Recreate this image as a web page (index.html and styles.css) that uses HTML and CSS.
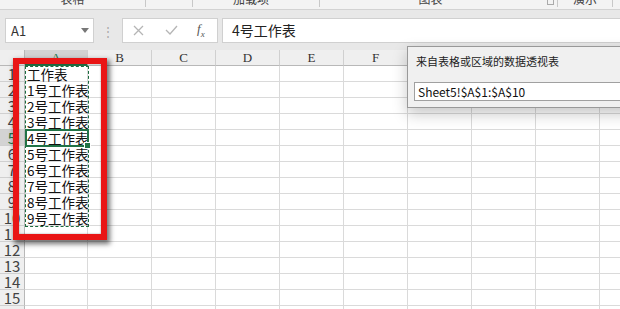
FILE: index.html
```html
<!DOCTYPE html>
<html lang="zh-CN">

<head>
    <meta charset="UTF-8">
    <title>数据透视表</title>
    <link rel="stylesheet" href="styles.css">
</head>

<body>
    <div class="ribbon">
        <div class="group g1"><span>表格</span></div>
        <div class="group g2"></div>
        <div class="group g3"><span>加载项</span></div>
        <div class="group g4"><span>图表</span><i class="launcher"></i></div>
        <div class="group g5"><span>演示</span></div>
    </div>

    <div class="formula-bar">
        <div class="name-box">
            <span>A1</span>
            <svg width="8" height="5" viewBox="0 0 8 5"><path d="M0 0h8L4 5z" fill="#777"/></svg>
        </div>
        <div class="grip">⋮</div>
        <div class="fx-buttons">
            <svg width="11" height="11" viewBox="0 0 11 11"><path d="M1 1l9 9M10 1l-9 9" stroke="#b5b5b5" stroke-width="1.3" fill="none"/></svg>
            <svg width="13" height="10" viewBox="0 0 13 10"><path d="M1 5l4 4 7-8" stroke="#b5b5b5" stroke-width="1.3" fill="none"/></svg>
            <span class="fx">f<sub>x</sub></span>
        </div>
        <div class="formula-input">4号工作表</div>
    </div>

    <div class="sheet">
        <div class="grid" id="grid"></div>

        <div class="marquee"></div>
        <div class="active-cell"><i class="handle"></i></div>
        <div class="red-box"></div>
    </div>

    <div class="dialog">
        <div class="dialog-title">来自表格或区域的数据透视表</div>
        <div class="dialog-input">Sheet5!$A$1:$A$10</div>
    </div>

    <script>
        const grid = document.getElementById("grid");
        const cols = ["A", "B", "C", "D", "E", "F", "G", "H", "I", "J"];
        const values = ["工作表", "1号工作表", "2号工作表", "3号工作表", "4号工作表",
            "5号工作表", "6号工作表", "7号工作表", "8号工作表", "9号工作表"];

        function cell(cls, text) {
            const div = document.createElement("div");
            div.className = cls;
            if (text) div.textContent = text;
            grid.appendChild(div);
        }

        cell("corner");
        // headers hidden under the dialog stay empty
        cols.forEach(c => cell(c === "A" ? "col-head selected" : "col-head", "GHIJ".includes(c) ? "" : c));

        for (let r = 1; r <= 16; r++) {
            cell(r === 5 ? "row-head selected" : "row-head", r);
            cols.forEach((c, i) => cell("cell", i === 0 ? values[r - 1] : ""));
        }
    </script>
</body>

</html>
```

FILE: styles.css
```css
body {
    margin: 0;
    width: 620px;
    height: 309px;
    overflow: hidden;
    font-family: "Noto Sans CJK SC", sans-serif;
    background: #ffffff;
    position: relative;
}

/* ribbon labels, only the bottom edge is visible */
.ribbon {
    display: flex;
    height: 9px;
    overflow: hidden;
    background: #f3f3f3;
    border-bottom: 1px solid #d2d2d2;
}

.group {
    display: flex;
    justify-content: center;
    position: relative;
    border-right: 1px solid #c8c8c8;
    box-sizing: border-box;
    height: 7px;
}

.group span {
    font-size: 12px;
    line-height: 14px;
    margin-top: -8px;
    color: #444;
}

.g1 { width: 146px; }
.g2 { width: 47px; }
.g3 { width: 127px; padding-right: 10px; }
.g4 { width: 238px; padding-right: 16px; }
.g5 { width: 55px; }

.launcher {
    position: absolute;
    right: 3px;
    top: 0;
    width: 5px;
    height: 4px;
    border: 1px solid #aaa;
    border-top: none;
}

.formula-bar {
    display: flex;
    align-items: center;
    height: 40px;
    padding-left: 5px;
    background: #e8e8e8;
    box-sizing: border-box;
}

.name-box {
    width: 89px;
    height: 25px;
    background: #fff;
    border: 1px solid #d0d0d0;
    box-sizing: border-box;
    display: flex;
    align-items: center;
    justify-content: space-between;
    padding: 0 4px 0 5px;
    font-size: 13px;
    color: #333;
}

.grip {
    width: 28px;
    text-align: center;
    color: #a8a8a8;
    font-size: 12px;
}

.fx-buttons {
    width: 96px;
    height: 25px;
    background: #fff;
    border: 1px solid #d0d0d0;
    box-sizing: border-box;
    display: flex;
    align-items: center;
    padding-left: 10px;
    gap: 21px;
}

.fx {
    font-family: "Liberation Serif", serif;
    font-style: italic;
    font-size: 13px;
    color: #555;
    margin-left: -2px;
}

.fx sub {
    font-size: 9px;
}

.formula-input {
    flex: 1;
    height: 25px;
    margin-left: 4px;
    background: #fff;
    border: 1px solid #d0d0d0;
    border-right: none;
    box-sizing: border-box;
    padding-left: 9px;
    font-size: 14px;
    line-height: 22px;
    color: #222;
}

/* worksheet */
.sheet {
    position: relative;
    height: 259px;
    overflow: hidden;
}

.grid {
    display: grid;
    grid-template-columns: 25px 63px repeat(9, 64px);
    grid-auto-rows: 16px;
}

.grid div {
    box-sizing: border-box;
    border-right: 1px solid #dadada;
    border-bottom: 1px solid #dadada;
    white-space: nowrap;
    overflow: hidden;
}

.grid .corner {
    background: #efefef;
    border-right: 1px solid #b8b8b8;
    border-bottom: 1px solid #b8b8b8;
}

.grid .col-head {
    background: #efefef;
    border-right: 1px solid #d0d0d0;
    border-bottom: 1px solid #b8b8b8;
    text-align: center;
    font-family: "Liberation Serif", serif;
    font-size: 13px;
    line-height: 15px;
    color: #333;
}

.grid .row-head {
    background: #efefef;
    border-right: 1px solid #b8b8b8;
    border-bottom: 1px solid #d0d0d0;
    text-align: center;
    font-size: 15px;
    line-height: 15px;
    color: #444;
}

.grid .selected {
    background: #d3d3d3;
    color: #217346;
}

.grid .col-head.selected {
    border-bottom: 2px solid #217346;
}

.grid .cell {
    font-size: 13.5px;
    line-height: 16px;
    padding-left: 2px;
    color: #111;
    overflow: visible;
}

.marquee {
    position: absolute;
    left: 25px;
    top: 16px;
    width: 64px;
    height: 161px;
    box-sizing: border-box;
    border: 1px dashed #1b6b3e;
}

.active-cell {
    position: absolute;
    left: 25px;
    top: 79px;
    width: 64px;
    height: 18px;
    box-sizing: border-box;
    border: 2px solid #217346;
}

.handle {
    position: absolute;
    right: -4px;
    bottom: -4px;
    width: 5px;
    height: 5px;
    background: #217346;
    border: 1px solid #fff;
}

/* annotation box */
.red-box {
    position: absolute;
    left: 13px;
    top: 8px;
    width: 94px;
    height: 182px;
    box-sizing: border-box;
    border: 6px solid #e91515;
    box-shadow: 2px 3px 5px 1px rgba(0, 0, 0, 0.55), inset 0 0 2px rgba(0, 0, 0, 0.4);
}

.dialog {
    position: absolute;
    left: 407px;
    top: 46px;
    width: 230px;
    height: 62px;
    box-sizing: border-box;
    background: #f0f0f0;
    border: 1px solid #999;
    box-shadow: 0 6px 14px rgba(0, 0, 0, 0.22);
    padding: 6px 0 0 6px;
}

.dialog-title {
    font-size: 11px;
    line-height: 16px;
    color: #222;
    padding-left: 2px;
}

.dialog-input {
    margin-top: 13px;
    height: 19px;
    background: #fff;
    border: 1px solid #a0a0a0;
    border-right: none;
    box-sizing: border-box;
    padding-left: 3px;
    font-size: 12px;
    line-height: 17px;
    color: #111;
}
```
